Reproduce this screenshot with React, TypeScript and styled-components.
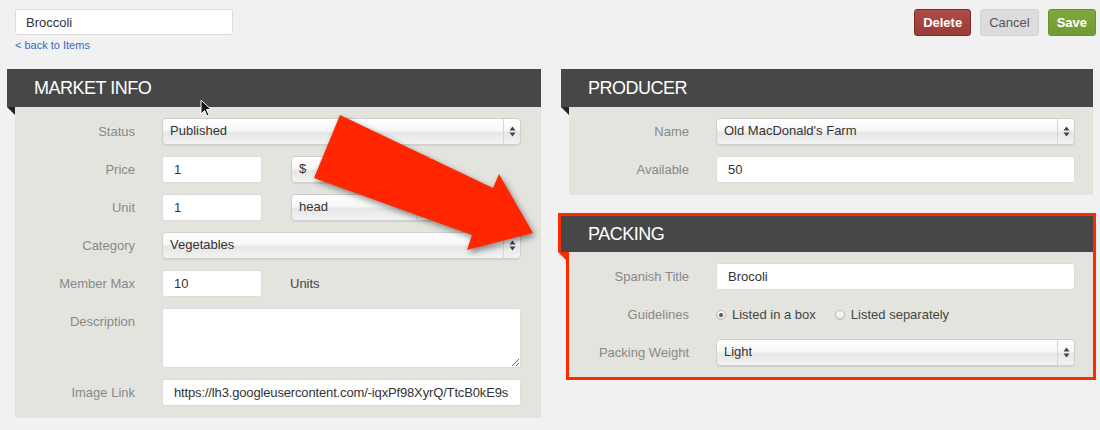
import React from 'react';
import styled, { createGlobalStyle, css } from 'styled-components';

const GlobalStyle = createGlobalStyle`
  html, body {
    margin: 0;
    background: #f1f1f1;
    font-family: "Liberation Sans", Arial, Helvetica, sans-serif;
    color: #333;
  }
`;

const App: React.FC = () => {
  return (
    <SPage>
      <GlobalStyle />
      <STopBar>
        <STitleBlock>
          <STitleInput defaultValue="Broccoli" />
          <SBackLink href="#">&lt; back to Items</SBackLink>
        </STitleBlock>
        <SActions>
          <SButton $kind="danger">Delete</SButton>
          <SButton $kind="plain">Cancel</SButton>
          <SButton $kind="success">Save</SButton>
        </SActions>
      </STopBar>

      <SColumns>
        <SPanel>
          <SPanelHeader>Market Info</SPanelHeader>
          <SPanelBody>
            <SLabel>Status</SLabel>
            <FakeSelect value="Published" />

            <SLabel>Price</SLabel>
            <SPair>
              <SInput $width={100} defaultValue="1" />
              <FakeSelect value="$" width={143} />
            </SPair>

            <SLabel>Unit</SLabel>
            <SPair>
              <SInput $width={100} defaultValue="1" />
              <FakeSelect value="head" width={143} />
            </SPair>

            <SLabel>Category</SLabel>
            <FakeSelect value="Vegetables" />

            <SLabel>Member Max</SLabel>
            <SPair>
              <SInput $width={100} defaultValue="10" />
              <SUnits>Units</SUnits>
            </SPair>

            <SLabel>Description</SLabel>
            <STextArea />

            <SLabel>Image Link</SLabel>
            <SInput
              $tight
              defaultValue="https://lh3.googleusercontent.com/-iqxPf98XyrQ/TtcB0kE9s"
            />
          </SPanelBody>
        </SPanel>

        <SRightColumn>
          <SPanel>
            <SPanelHeader>Producer</SPanelHeader>
            <SPanelBody $narrow>
              <SLabel>Name</SLabel>
              <FakeSelect value="Old MacDonald's Farm" />

              <SLabel>Available</SLabel>
              <SInput defaultValue="50" />
            </SPanelBody>
          </SPanel>

          <SPanel>
            <SPanelHeader $highlight>Packing</SPanelHeader>
            <SPanelBody $narrow $highlight>
              <SLabel>Spanish Title</SLabel>
              <SInput defaultValue="Brocoli" />

              <SLabel>Guidelines</SLabel>
              <SRadioGroup>
                <SRadioOption>
                  <SRadio $checked />
                  Listed in a box
                </SRadioOption>
                <SRadioOption>
                  <SRadio />
                  Listed separately
                </SRadioOption>
              </SRadioGroup>

              <SLabel>Packing Weight</SLabel>
              <FakeSelect value="Light" />
            </SPanelBody>
          </SPanel>
        </SRightColumn>
      </SColumns>

      <SOverlay viewBox="0 0 1100 430" width="1100" height="430">
        <g style={{ filter: 'drop-shadow(2px 3px 3px rgba(0,0,0,0.45))' }}>
          <polygon
            points="340,115 493,188 499,174 533,233 467,250 472,235 314,178"
            fill="#ff2600"
          />
        </g>
        <path
          d="M201 100 L201 114 L204.5 110.5 L207 116 L209 115 L206.5 109.5 L211 109.5 Z"
          fill="#111"
          stroke="#fff"
          strokeWidth="1"
          strokeLinejoin="round"
        />
      </SOverlay>
    </SPage>
  );
};

const FakeSelect: React.FC<{ value: string; width?: number }> = ({ value, width }) => (
  <SSelect $width={width}>
    <SSelectValue>{value}</SSelectValue>
    <SSelectArrows>
      <svg width="7" height="11" viewBox="0 0 7 11">
        <path d="M3.5 0.5 L6.5 4.5 L0.5 4.5 Z" fill="#444" />
        <path d="M3.5 10.5 L6.5 6.5 L0.5 6.5 Z" fill="#444" />
      </svg>
    </SSelectArrows>
  </SSelect>
);

export default App;

const SPage = styled.div`
  position: relative;
  width: 1100px;
  height: 430px;
  box-sizing: border-box;
  padding: 9px 7px 0;
  overflow: hidden;
`;

const STopBar = styled.div`
  height: 60px;
  display: flex;
  justify-content: space-between;
  align-items: flex-start;
  padding-left: 8px;
  margin-right: -3px;
`;

const STitleBlock = styled.div`
  display: flex;
  flex-direction: column;
`;

const fieldBase = css`
  box-sizing: border-box;
  height: 27px;
  background: #fff;
  border: 1px solid #dcdcdc;
  border-radius: 3px;
  font-family: inherit;
  font-size: 13px;
  color: #333;
  outline: none;
`;

const STitleInput = styled.input`
  ${fieldBase};
  height: 26px;
  width: 218px;
  padding: 0 10px;
`;

const SBackLink = styled.a`
  margin-top: 4px;
  font-size: 11px;
  color: #3a68c0;
  text-decoration: none;
`;

const SActions = styled.div`
  display: flex;
  gap: 9px;
`;

const buttonKinds = {
  danger: css`
    background: linear-gradient(#ad4b45, #9c3c37);
    border-color: #7e2b27;
    color: #fff;
    font-weight: bold;
  `,
  plain: css`
    background: #dcdcdc;
    border-color: #d2d2d2;
    color: #555;
  `,
  success: css`
    background: linear-gradient(#80a83e, #719a33);
    border-color: #6a9130;
    color: #fff;
    font-weight: bold;
  `,
};

const SButton = styled.button<{ $kind: keyof typeof buttonKinds }>`
  height: 27px;
  padding: 0 8px;
  border: 1px solid;
  border-radius: 3px;
  font-family: inherit;
  font-size: 13px;
  ${(p) => buttonKinds[p.$kind]};
`;

const SColumns = styled.div`
  display: grid;
  grid-template-columns: 534px 532px;
  column-gap: 20px;
  align-items: start;
`;

const SRightColumn = styled.div`
  display: flex;
  flex-direction: column;
  gap: 20px;
`;

const SPanel = styled.section`
  display: flex;
  flex-direction: column;
`;

const SPanelHeader = styled.h2<{ $highlight?: boolean }>`
  margin: 0;
  height: 38px;
  box-sizing: border-box;
  display: flex;
  align-items: center;
  padding-left: 27px;
  background: #474747;
  color: #fff;
  font-size: 18px;
  font-weight: normal;
  letter-spacing: -0.5px;
  text-transform: uppercase;
  ${(p) =>
    p.$highlight &&
    css`
      border: 3px solid #ff2a00;
      border-bottom: 0;
      margin: -2px -3px 0;
      padding-left: 27px;
      height: 39px;
    `}
`;

const SPanelBody = styled.div<{ $narrow?: boolean; $highlight?: boolean }>`
  position: relative;
  margin-left: 8px;
  background: #e4e4df;
  padding: 11px ${(p) => (p.$narrow ? 18 : 20)}px 12px 0;
  display: grid;
  grid-template-columns: 120px 1fr;
  column-gap: 27px;
  row-gap: 11px;

  &::before {
    content: '';
    position: absolute;
    left: -8px;
    top: 0;
    width: 0;
    height: 0;
    border-top: 8px solid #222;
    border-left: 8px solid transparent;
  }

  ${(p) =>
    p.$highlight &&
    css`
      border: 3px solid #ff2a00;
      border-top: 0;
      margin-left: 5px;
      margin-right: -3px;
      padding-bottom: 11px;
      padding-right: 18px;

      &::before {
        left: -11px;
        border-top: 11px solid #ff2a00;
        border-left: 11px solid transparent;
      }
    `}
`;

const SLabel = styled.label`
  text-align: right;
  color: #888;
  font-size: 13px;
  line-height: 27px;
`;

const SInput = styled.input<{ $width?: number; $tight?: boolean }>`
  ${fieldBase};
  width: ${(p) => (p.$width ? `${p.$width}px` : '100%')};
  padding: 0 11px;
  ${(p) =>
    p.$tight &&
    css`
      padding: 0 8px 0 11px;
      letter-spacing: -0.15px;
    `}
`;

const STextArea = styled.textarea`
  ${fieldBase};
  width: 100%;
  height: 60px;
  resize: vertical;
  display: block;
`;

const SPair = styled.div`
  display: flex;
  align-items: center;
  gap: 29px;
`;

const SUnits = styled.span`
  font-size: 13px;
  color: #444;
  margin-left: -1px;
`;

const SSelect = styled.div<{ $width?: number }>`
  box-sizing: border-box;
  width: ${(p) => (p.$width ? `${p.$width}px` : '100%')};
  height: 27px;
  display: flex;
  align-items: stretch;
  border: 1px solid #cfcfcf;
  border-radius: 4px;
  background: linear-gradient(#ffffff 0%, #f7f7f7 45%, #e6e6e6 55%, #f3f3f3 100%);
  box-shadow: 0 1px 1px rgba(0, 0, 0, 0.08);
  font-size: 13px;
  color: #333;
`;

const SSelectValue = styled.span`
  flex: 1;
  padding-left: 7px;
  line-height: 24px;
  white-space: nowrap;
  overflow: hidden;
`;

const SSelectArrows = styled.span`
  width: 16px;
  display: flex;
  align-items: center;
  justify-content: center;
  border-left: 1px solid #d6d6d6;
`;

const SRadioGroup = styled.div`
  display: flex;
  align-items: center;
  gap: 19px;
  font-size: 13px;
  color: #444;
`;

const SRadioOption = styled.span`
  display: flex;
  align-items: center;
  gap: 6px;
`;

const SRadio = styled.span<{ $checked?: boolean }>`
  position: relative;
  box-sizing: border-box;
  width: 10px;
  height: 10px;
  border-radius: 50%;
  border: 1px solid #b5b5b5;
  background: linear-gradient(#fdfdfd, #e2e2e2);

  ${(p) =>
    p.$checked &&
    css`
      &::after {
        content: '';
        position: absolute;
        left: 2px;
        top: 2px;
        width: 4px;
        height: 4px;
        border-radius: 50%;
        background: #555;
      }
    `}
`;

const SOverlay = styled.svg`
  position: absolute;
  left: 0;
  top: 0;
  pointer-events: none;
`;
